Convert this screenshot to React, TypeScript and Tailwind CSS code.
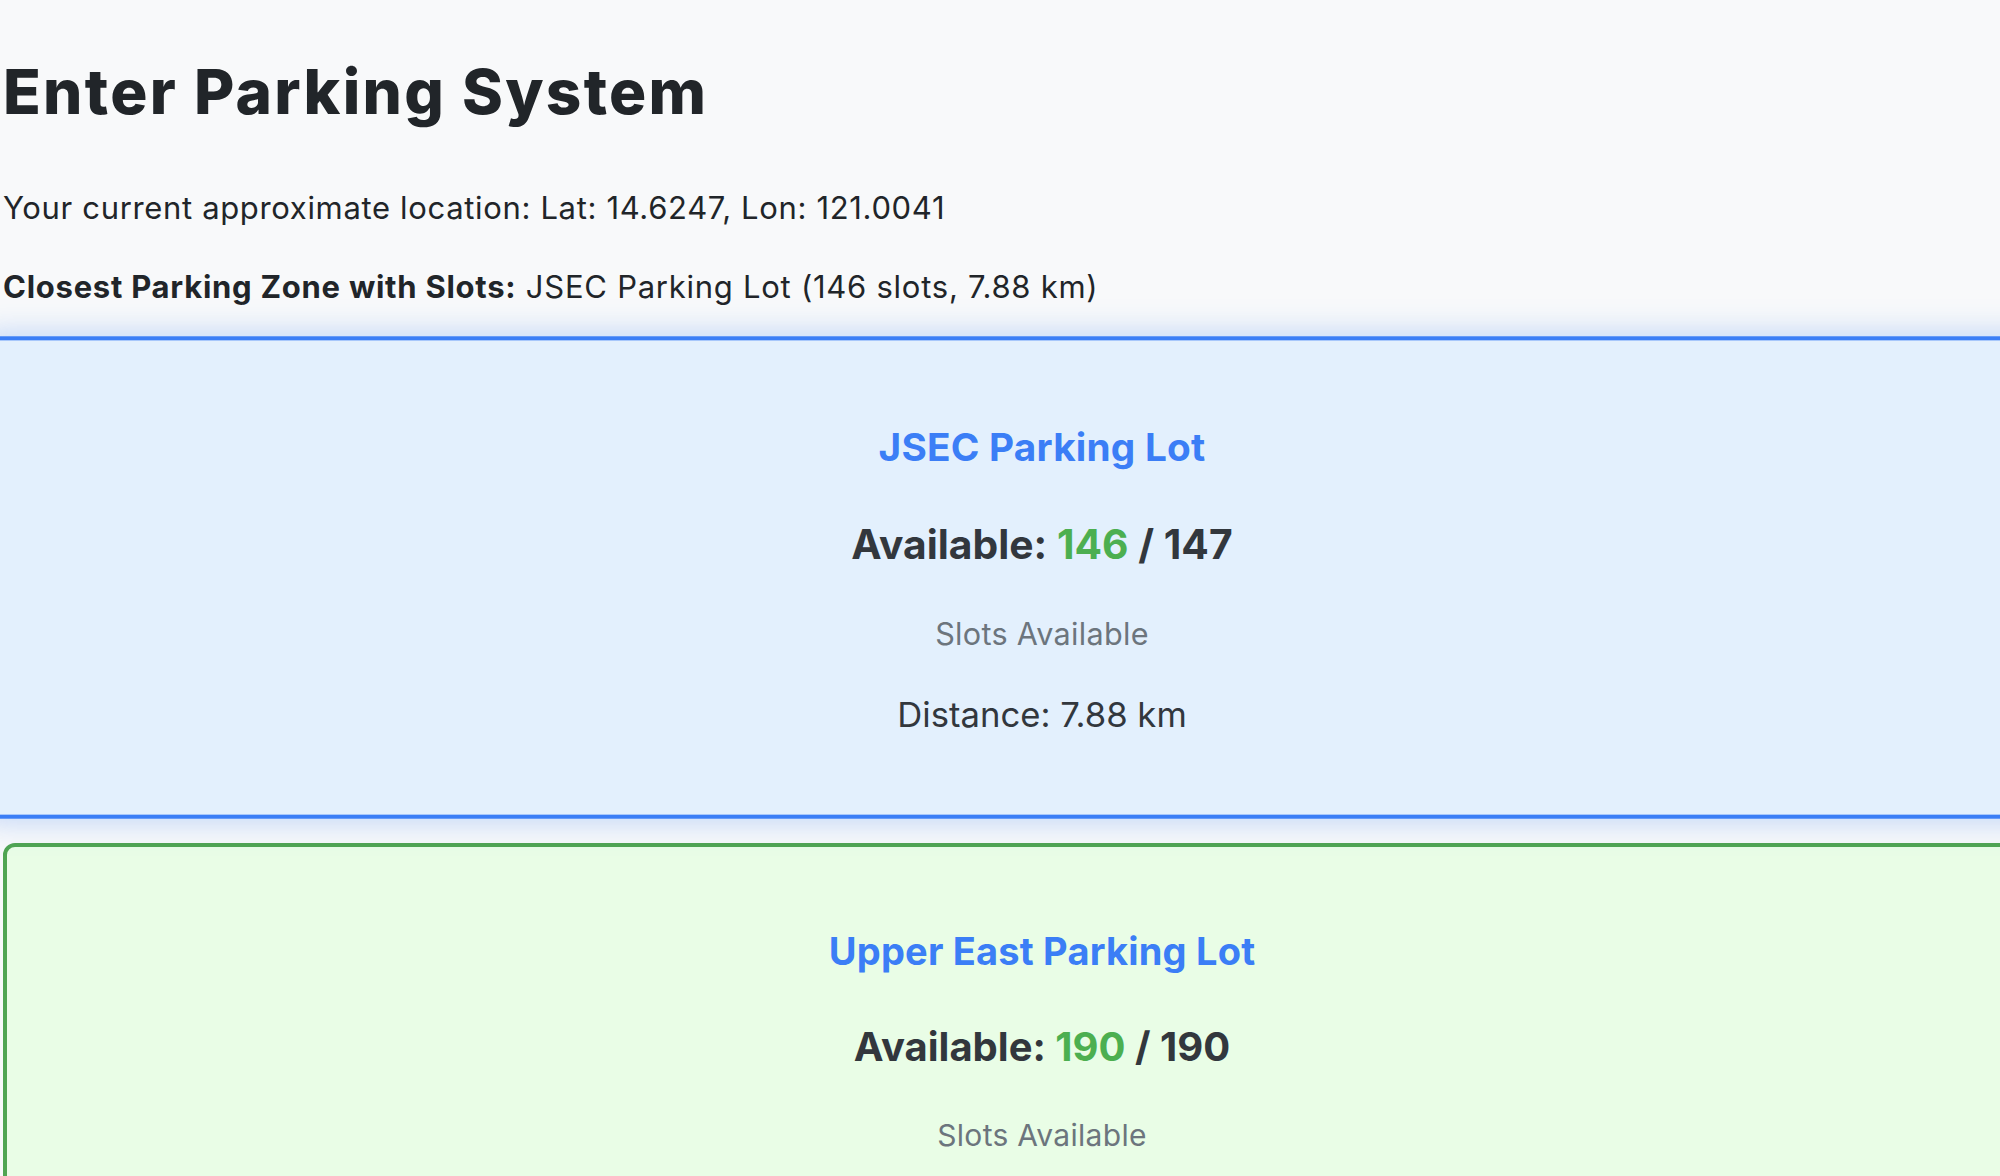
import React from "react";

type Lot = {
  name: string;
  free: number;
  total: number;
  distance: string;
  active?: boolean;
};

const lots: Lot[] = [
  { name: "JSEC Parking Lot", free: 146, total: 147, distance: "7.88 km", active: true },
  { name: "Upper East Parking Lot", free: 190, total: 190, distance: "8.41 km" },
];

const LotCard: React.FC<{ lot: Lot }> = ({ lot }) => (
  <div
    className={
      lot.active
        ? "flex flex-col items-center border-y-4 border-[#3b7ef6] bg-[#e3f0fd] pt-[81px] pb-[77px] scale-[1.02] shadow-[0_0_30px_rgba(59,130,246,0.35)] mb-[29px]"
        : "flex flex-col items-center border-4 border-[#50a552] rounded-[12px] bg-[#e9fde6] pt-[81px] pb-[77px]"
    }
  >
    <div className="text-[38px] leading-[46px] font-bold text-[#3b7ef6] tracking-[0.2px]">
      {lot.name}
    </div>
    <div className="mt-[48px] text-[40px] leading-[50px] font-bold text-[#32373d]">
      Available: <span className="text-[#4caf50]">{lot.free}</span> / {lot.total}
    </div>
    <div className="mt-[45px] text-[30px] leading-[36px] tracking-[0.3px] text-[#6c757d]">
      Slots Available
    </div>
    <div className="mt-[40px] text-[34px] leading-[42px] text-[#32373d]">
      Distance: {lot.distance}
    </div>
  </div>
);

export default function App() {
  return (
    <div className="w-full min-h-screen overflow-hidden bg-[#f8f9fa] font-['Inter',sans-serif] text-[#212529]">
      <div className="w-[2078px] ml-[3px] pt-[55px]">
        <h1 className="text-[62px] leading-[74px] font-extrabold tracking-[2.3px]">
          Enter Parking System
        </h1>
        <p className="mt-[56px] text-[31px] leading-[45px] tracking-[0.66px]">
          Your current approximate location: Lat: 14.6247, Lon: 121.0041
        </p>
        <p className="mt-[34px] text-[31px] leading-[45px] tracking-[0.74px]">
          <span className="font-bold">Closest Parking Zone with Slots:</span> JSEC Parking Lot
          (146 slots, 7.88 km)
        </p>
        <div className="mt-[32px] flex flex-col">
          {lots.map((lot) => (
            <LotCard key={lot.name} lot={lot} />
          ))}
        </div>
      </div>
    </div>
  );
}
